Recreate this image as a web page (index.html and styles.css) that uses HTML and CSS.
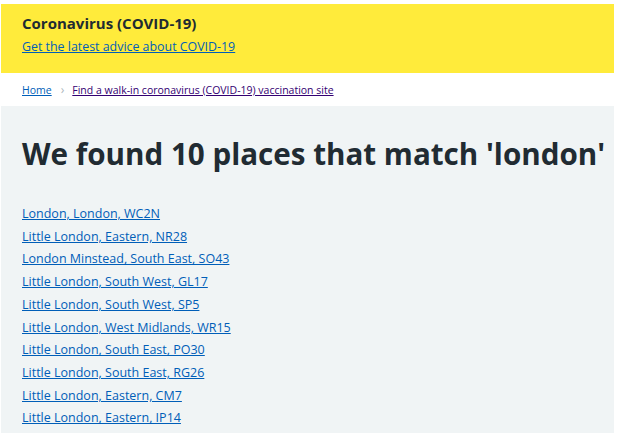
FILE: index.html
```
<!DOCTYPE html>
<html lang="en">
<head>
    <meta charset="UTF-8">
    <meta name="viewport" content="width=device-width, initial-scale=1.0">
    <title>Find a walk-in coronavirus (COVID-19) vaccination site</title>
    <link rel="stylesheet" href="styles.css">
</head>
<body>
    <div class="page">
        <div class="banner">
            <h2 class="banner-title">Coronavirus (COVID-19)</h2>
            <p class="banner-text"><a href="#">Get the latest advice about COVID-19</a></p>
        </div>

        <nav class="breadcrumb">
            <a href="#" class="crumb">Home</a>
            <span class="sep">&rsaquo;</span>
            <a href="#" class="crumb visited">Find a walk-in coronavirus (COVID-19) vaccination site</a>
        </nav>

        <main class="results">
            <h1>We found 10 places that match 'london'</h1>
            <ul class="places">
                <li><a href="#">London, London, WC2N</a></li>
                <li><a href="#">Little London, Eastern, NR28</a></li>
                <li><a href="#">London Minstead, South East, SO43</a></li>
                <li><a href="#">Little London, South West, GL17</a></li>
                <li><a href="#">Little London, South West, SP5</a></li>
                <li><a href="#">Little London, West Midlands, WR15</a></li>
                <li><a href="#">Little London, South East, PO30</a></li>
                <li><a href="#">Little London, South East, RG26</a></li>
                <li><a href="#">Little London, Eastern, CM7</a></li>
                <li><a href="#">Little London, Eastern, IP14</a></li>
            </ul>
        </main>
    </div>
</body>
</html>
```

FILE: styles.css
```
body {
    margin: 0;
    padding: 0;
    font-family: "Open Sans", Arial, sans-serif;
    color: #212b32;
    background: #fff;
}

.page {
    padding: 4px 7px 4px 1px;
}

a {
    color: #005eb8;
}

/* yellow covid banner */
.banner {
    background-color: #ffeb3b;
    height: 69px;
    padding: 8px 21px 0;
    box-sizing: border-box;
}

.banner-title {
    margin: 0;
    font-size: 15px;
    font-weight: 700;
    line-height: 22px;
}

.banner-text {
    margin: 4px 0 0;
    font-size: 12.4px;
    line-height: 18px;
}

/* breadcrumb */
.breadcrumb {
    height: 33px;
    padding: 0 21px;
    display: flex;
    align-items: center;
    font-size: 10.5px;
}

.crumb {
    color: #005eb8;
}

.crumb.visited {
    color: #330072;
}

.sep {
    color: #aeb7bd;
    margin: 0 8px 0 9px;
    font-size: 12px;
}

/* results */
.results {
    background-color: #f0f4f5;
    height: 327px;
    padding: 30px 21px 0;
    box-sizing: border-box;
}

h1 {
    margin: 0 0 31px;
    font-size: 29.6px;
    line-height: 36px;
    font-weight: 700;
    white-space: nowrap;
}

.places {
    list-style: none;
    margin: 0;
    padding: 0;
}

.places li {
    font-size: 12.5px;
    line-height: 22.7px;
}
```
